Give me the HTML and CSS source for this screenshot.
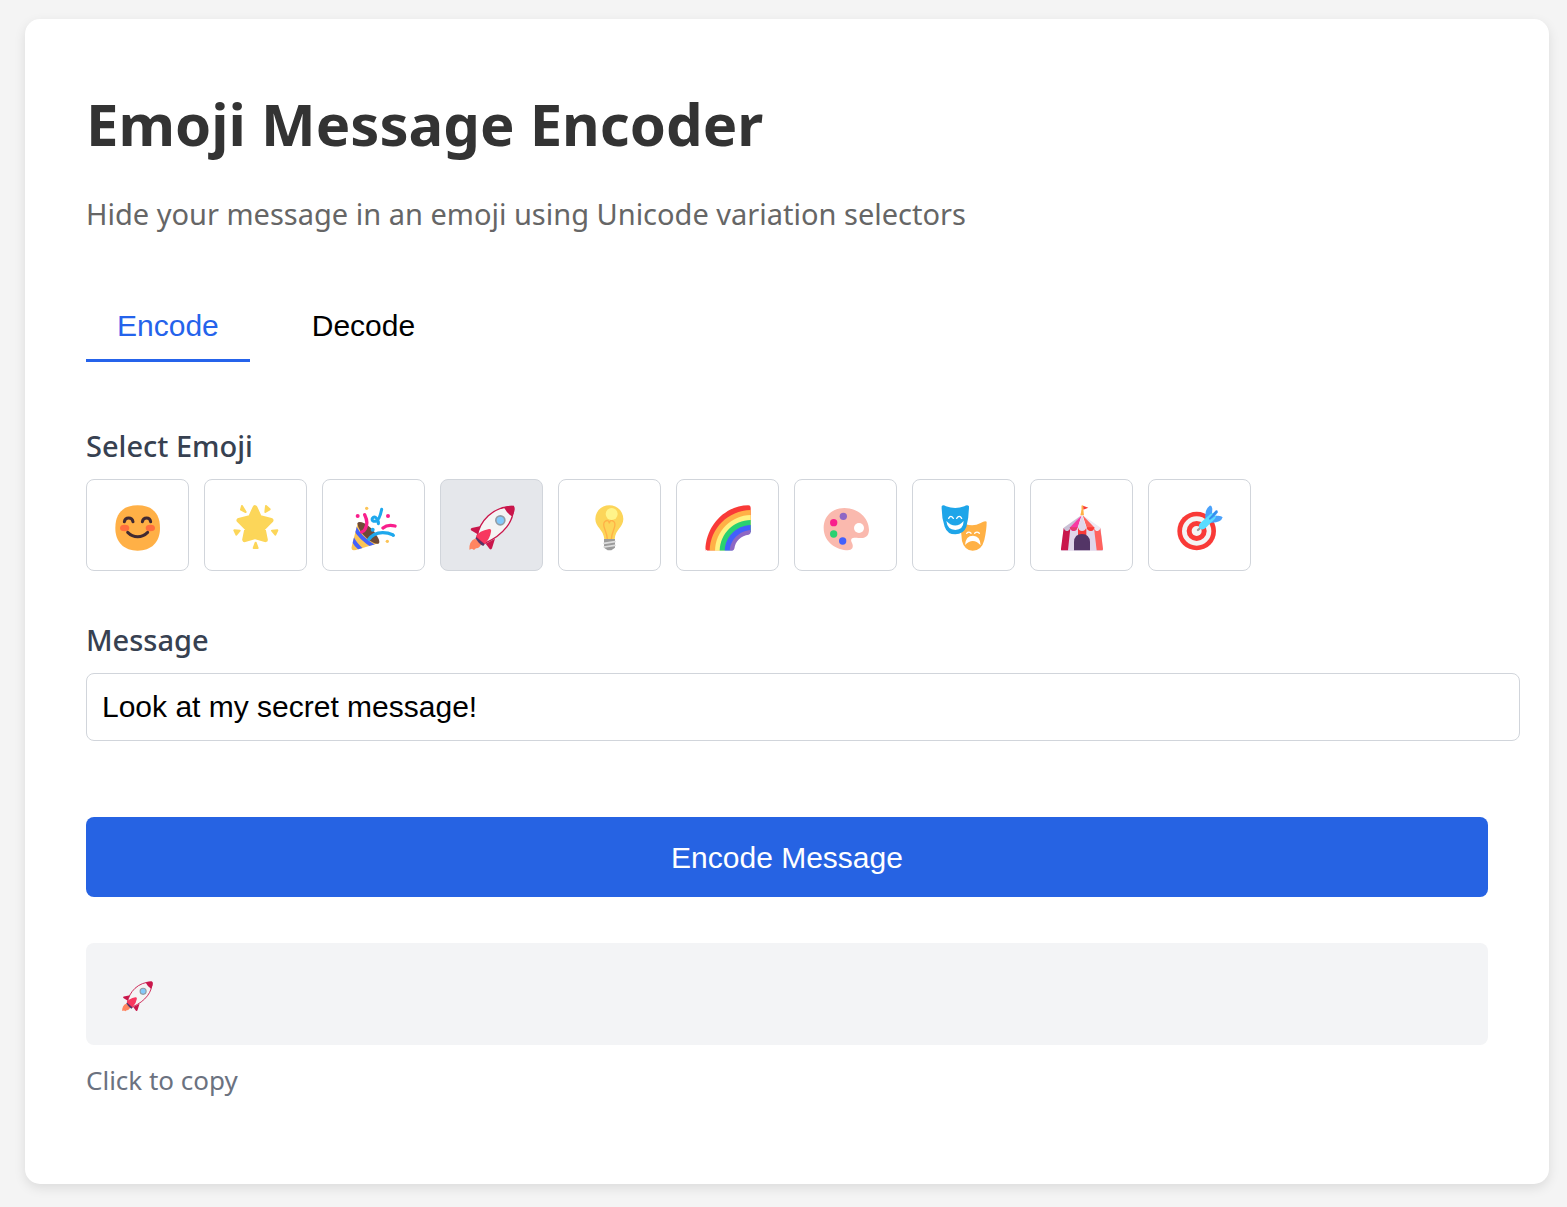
FILE: index.html
```html
<!DOCTYPE html>
<html lang="en">
<head>
<meta charset="utf-8">
<meta name="viewport" content="width=device-width, initial-scale=1">
<title>Emoji Message Encoder</title>
<link rel="stylesheet" href="styles.css">
</head>
<body>
<svg class="sprite" aria-hidden="true">
  <symbol id="rocket" viewBox="459 105 138 138">
    <path fill="#ff8560" d="M477 206Q459 213 460 239L468 236L474 240L480 235Q491 236 497 220Z"/>
    <path fill="#c9164b" d="M485 193L465 181Q462 176 467 174L495 168ZM509 221L521 237Q526 240 528 235L537 206Z"/>
    <path fill="#533566" d="M478 205L484 198L508 220L502 228Q497 227 489 219Z"/>
    <path fill="#f4f4f4" stroke="#c9164b" stroke-width="4" d="M483 202C490 154 530 109 592 109C596 151 564 195 506 220Z"/>
    <path fill="#c9164b" d="M564 112Q583 105 593 108Q598 112 595 124Q593 132 588 139Q574 132 564 112Z"/>
    <path fill="#f8375f" d="M480 199Q489 183 519 177Q527 176 525 185Q522 206 506 222Z"/>
    <circle cx="553" cy="151" r="13.500" fill="#83c9fb" stroke="#929da5" stroke-width="5"/>
  </symbol>
</svg>
<main class="card">
  <h1 class="title">Emoji Message Encoder</h1>
  <p class="subtitle">Hide your message in an emoji using Unicode variation selectors</p>

  <div class="tabs" role="tablist">
    <button class="tab tab-active" type="button" role="tab" aria-selected="true">Encode</button>
    <button class="tab" type="button" role="tab" aria-selected="false">Decode</button>
  </div>

  <form class="form">
    <div class="field">
      <span class="label" id="emoji-label">Select Emoji</span>
      <div class="emoji-grid" role="group" aria-labelledby="emoji-label">
        <button class="emoji" type="button" aria-label="Smile">
          <svg viewBox="105 105 138 138">
            <path fill="#ffb046" d="M173 106C215 106 240 128 240 174C240 218 213 242 173 242C133 242 106 218 106 174C106 128 131 106 173 106Z"/>
            <ellipse cx="134" cy="174" rx="14" ry="10" fill="#ff6f3d"/><ellipse cx="211" cy="174" rx="14" ry="10" fill="#ff6f3d"/>
            <path fill="none" stroke="#402a32" stroke-width="9" stroke-linecap="round" d="M133 155Q135 144 146 144Q157 144 159 155M187 155Q189 144 200 144Q210 144 212 155M143 187Q156 200 173 200Q190 200 203 187"/>
          </svg>
        </button>
        <button class="emoji" type="button" aria-label="Glowing star">
          <svg viewBox="459 105 138 138">
            <g fill="#fcd659" stroke="#fcd659" stroke-linejoin="round">
              <path stroke-width="15" d="M525 113L538 142L573 151L549 175L556 209L525 200L494 209L501 175L477 151L512 142Z"/>
              <path stroke-width="6" d="M486 108L497 126L483 119ZM558 108L569 118L556 126ZM463 181L479 182L469 194ZM576 182L592 181L586 194ZM527 218L533 234L521 234Z"/>
            </g>
          </svg>
        </button>
        <button class="emoji" type="button" aria-label="Party popper">
          <svg viewBox="105 105 138 138">
            <clipPath id="cone"><path d="M125 160L106 233Q107 242 117 241L190 219Z"/></clipPath>
            <g clip-path="url(#cone)">
              <path fill="#fcc456" d="M100 150H195V245H100Z"/>
              <path fill="none" stroke="#4561fa" stroke-width="12" d="M116 172Q132 205 175 230M106 200Q118 226 142 244"/>
            </g>
            <path fill="#6e4a38" d="M124 160Q128 152 145 160Q166 170 183 198Q195 217 187 221Q174 223 155 207Q127 184 124 160Z"/>
            <path fill="none" stroke="#f91f8c" stroke-width="10" stroke-linecap="round" d="M146 134Q158 158 148 176Q144 184 137 186M201 174Q215 162 237 168"/>
            <path fill="none" stroke="#1ea8ed" stroke-width="10" d="M156 211Q172 188 200 188Q216 188 232 195"/>
            <circle cx="232" cy="196" r="5" fill="#1ea8ed"/>
            <path fill="none" stroke="#1ea8ed" stroke-width="9" stroke-linecap="round" stroke-linejoin="round" d="M197 118Q190 153 178 154Q166 154 169 145Q175 137 182 146Q189 156 187 161"/>
            <circle cx="170" cy="179" r="6" fill="#1ea8ed"/>
            <g fill="#f91f8c"><circle cx="125" cy="138" r="6"/><circle cx="216" cy="138" r="6"/></g>
            <g fill="#fcc456"><circle cx="152" cy="115" r="5"/><circle cx="214" cy="214" r="5"/></g>
          </svg>
        </button>
        <button class="emoji emoji-selected" type="button" aria-label="Rocket" aria-pressed="true">
          <svg><use href="#rocket"/></svg>
        </button>
        <button class="emoji" type="button" aria-label="Light bulb">
          <svg viewBox="105 105 138 138">
            <path fill="#fcd559" d="M172 106C195 106 214 123 214 147C214 172 190 178 188 208H157C155 178 130 172 130 147C130 123 149 106 172 106Z"/>
            <path fill="none" stroke="#ffb146" stroke-width="4" d="M166 208C166 185 147 165 158 155Q170 146 172 160Q174 146 186 155C197 165 178 185 178 208"/>
            <circle cx="179" cy="132" r="18" fill="#fff48a"/>
            <path fill="#9b9b9b" d="M156 207H189V233L178 241H167L156 233Z"/>
            <path stroke="#dedede" stroke-width="5" stroke-linecap="round" d="M156 220L189 215M156 231L189 226"/>
          </svg>
        </button>
        <button class="emoji" type="button" aria-label="Rainbow">
          <svg viewBox="459 105 138 138">
            <path fill="#f93a37" d="M460 242C460 168 519 106 589 106Q596 106 596 113V242Z"/>
            <path fill="#ffb046" d="M473 242C474 176 528 121 596 120V242Z"/>
            <path fill="#fff283" d="M489 242C490 183 539 136 596 135V242Z"/>
            <path fill="#29d171" d="M503 242C504 191 545 151 596 150V242Z"/>
            <path fill="#4360fc" d="M518 242C519 201 552 167 596 165V242Z"/>
            <path fill="#8e68c4" d="M533 242C534 209 563 182 596 180V242Z"/>
            <path fill="#fff" d="M547 243V237C549 213 568 196 590 194Q596 192 596 187L600 185V246H460V235Q461 241 466 242H541Q547 241 547 235Z"/>
          </svg>
        </button>
        <button class="emoji" type="button" aria-label="Palette">
          <svg viewBox="105 105 138 138">
            <path fill="#fab9ae" d="M169 114C210 114 243 144 243 180C242 200 231 206 211 204C193 202 186 205 191 217C199 232 192 241 179 241C151 241 107 220 107 174C107 138 133 114 169 114Z"/>
            <circle cx="213" cy="174" r="15" fill="#fff"/><circle cx="166" cy="139" r="11" fill="#8f67c5"/><circle cx="137" cy="158" r="11" fill="#f91f8c"/><circle cx="137" cy="192" r="11" fill="#29d171"/><circle cx="164" cy="213" r="11" fill="#4360fc"/>
          </svg>
        </button>
        <button class="emoji" type="button" aria-label="Theater masks">
          <svg viewBox="459 105 138 138">
            <path fill="#ffb145" d="M517 162Q522 157 532 162Q556 171 578 159Q590 152 596 155Q596 178 589 210Q581 242 554 242Q529 241 522 213Z"/>
            <path fill="#1ea5e9" d="M461 109Q465 103 474 109Q502 119 529 109Q538 103 543 109Q543 141 535 171Q526 193 502 193Q478 193 470 170Q460 140 461 109Z"/>
            <path fill="none" stroke="#fff" stroke-width="4" stroke-linecap="round" d="M482 145Q488 133 496 145M506 145Q514 133 521 145M536 190Q542 183 549 190M560 190Q567 183 574 190"/>
            <path fill="#fff" d="M475 153Q502 180 527 153Q526 179 502 180Q478 179 475 153ZM531 225Q533 197 555 197Q577 198 578 226Q555 200 531 225Z"/>
          </svg>
        </button>
        <button class="emoji" type="button" aria-label="Circus tent">
          <svg viewBox="105 105 138 138">
            <path fill="#e0d6ea" d="M119 176H230L237 242H111Z"/>
            <path fill="#c9164b" d="M119 174H139L132 241H113Q110 241 111 236Z"/>
            <path fill="#ff625e" d="M210 174H229L237 237Q237 241 233 241H218Z"/>
            <path fill="#f93a37" d="M162 173H187V202H162Z"/>
            <path fill="#533566" d="M150 241V216Q151 192 174 192Q197 193 198 216V241Z"/>
            <path fill="#c9c0d5" d="M172 136L119 173Q122 184 132 183L142 173Z"/>
            <path fill="#eee9f4" d="M177 136L230 173Q226 184 216 183L208 173Z"/>
            <path fill="#f83ba4" d="M173 136L137 173Q140 183 150 183Q158 182 161 173Z"/>
            <path fill="#e53b70" d="M137 172H161Q158 183 149 183Q140 182 137 172Z"/>
            <path fill="#ff625e" d="M176 136L212 173Q209 183 200 183Q190 182 188 173Z"/>
            <path fill="#f93a37" d="M188 172H211Q208 183 200 183Q190 182 188 172Z"/>
            <path fill="#e0d6ea" d="M174 135L162 172Q164 183 174 183Q185 183 187 172Z"/>
            <path fill="#f93a37" d="M177 107L193 113L178 119Z"/>
            <path stroke="#ffb145" stroke-width="5" stroke-linecap="round" d="M175 108V125"/>
            <path fill="#ffb145" d="M173 120H178L180 136H169Z"/>
          </svg>
        </button>
        <button class="emoji" type="button" aria-label="Direct hit">
          <svg viewBox="459 105 138 138">
            <circle cx="518" cy="183" r="58" fill="#f93a37"/><circle cx="518" cy="183" r="44" fill="#f4f4f4"/><circle cx="518" cy="183" r="30" fill="#f93a37"/><circle cx="518" cy="183" r="15" fill="#f4f4f4"/>
            <path stroke="#9b9b9b" stroke-width="7" stroke-linecap="round" d="M522 180L532 171"/>
            <path fill="#4aa2fb" d="M544 145Q541 119 557 107Q563 105 565 116L564 133L576 121L582 127L573 138Q591 135 596 142Q591 159 561 158Z"/>
            <path fill="#58dcff" d="M528 160L559 132L568 128L562 147L578 135L573 146L547 172Q538 182 528 176Q521 169 528 160Z"/>
            <path stroke="#348fee" stroke-width="6" stroke-linecap="round" d="M558 146L578 124"/>
          </svg>
        </button>
      </div>
    </div>

    <div class="field">
      <label class="label" for="message">Message</label>
      <input class="text-input" id="message" type="text" value="Look at my secret message!">
    </div>

    <button class="submit" type="button">Encode Message</button>
  </form>

  <button class="result" type="button" aria-label="Encoded emoji" aria-describedby="copy-hint">
    <svg><use href="#rocket"/></svg>
  </button>
  <p class="hint" id="copy-hint">Click to copy</p>
</main>
</body>
</html>
```

FILE: styles.css
```css
body {
  margin: 0;
  padding: 19px 18px 23px 25px;
  background: #f4f4f4;
  font-family: "Noto Sans", sans-serif;
}

.sprite {
  position: absolute;
  width: 0;
  height: 0;
}

.card {
  padding: 61px 61px 85px;
  border-radius: 15px;
  background: #fff;
  box-shadow: 0 4px 12px rgba(0, 0, 0, 0.1);
}

.title {
  margin: 0 0 26px;
  color: #333;
  font-size: 58px;
  font-weight: 700;
  line-height: 88px;
}

.subtitle {
  margin: 0 0 58px;
  color: #666;
  font-size: 29px;
  line-height: 40px;
}

.tabs {
  display: flex;
  gap: 31px;
  margin-bottom: 62px;
}

.tab {
  padding: 16px 31px;
  border: 0;
  border-bottom: 3px solid transparent;
  background: none;
  color: #000;
  font-family: "Liberation Sans", sans-serif;
  font-size: 30px;
  line-height: 35px;
  cursor: pointer;
}

.tab-active {
  border-bottom-color: #2563eb;
  color: #2563eb;
}

.field {
  margin-bottom: 47px;
}

.label {
  display: block;
  margin-bottom: 11px;
  color: #374151;
  font-size: 29px;
  font-weight: 500;
  line-height: 44px;
}

.emoji-grid {
  display: flex;
  flex-wrap: wrap;
  gap: 15px;
}

.emoji {
  padding: 25px 27px 19px 28px;
  border: 1px solid #d1d5db;
  border-radius: 8px;
  background: #fff;
  cursor: pointer;
}

.emoji-selected {
  background: #e5e7eb;
}

.emoji svg {
  display: block;
  width: 46px;
  height: 46px;
}

.text-input {
  display: block;
  width: 100%;
  padding: 15px;
  border: 1px solid #d1d5db;
  border-radius: 8px;
  background: #fff;
  color: #000;
  font-family: "Liberation Sans", sans-serif;
  font-size: 30px;
  line-height: 36px;
  height: 36px;
}

.submit {
  display: block;
  width: 100%;
  margin-top: 76px;
  padding: 23px 22px 21px;
  border: 0;
  border-radius: 8px;
  background: #2663e3;
  color: #fff;
  font-family: "Liberation Sans", sans-serif;
  font-size: 30px;
  line-height: 36px;
  cursor: pointer;
}

.result {
  display: block;
  width: 100%;
  margin: 46px 0 16px;
  padding: 38px 36px 33px;
  border: 0;
  border-radius: 8px;
  background: #f3f4f6;
  cursor: pointer;
}

.result svg {
  display: block;
  width: 31px;
  height: 31px;
}

.hint {
  margin: 0;
  color: #6b7280;
  font-size: 26px;
  line-height: 38px;
}
```
